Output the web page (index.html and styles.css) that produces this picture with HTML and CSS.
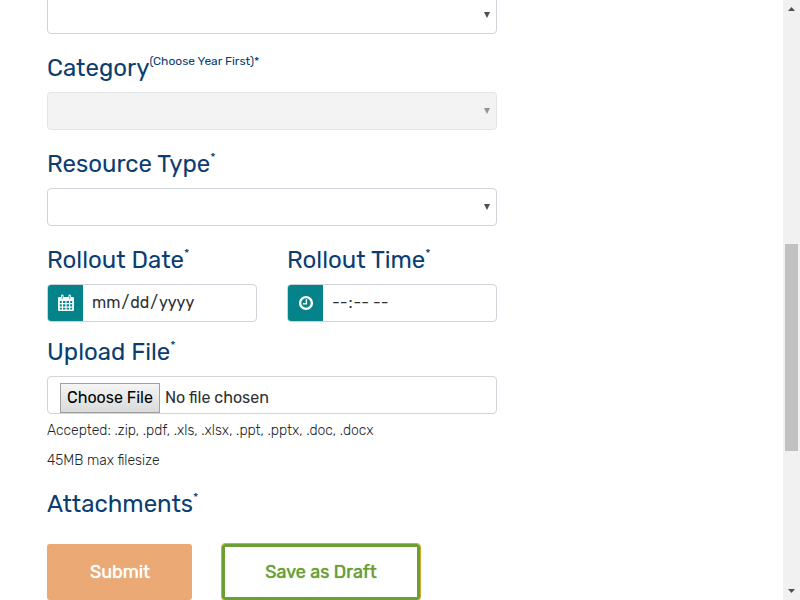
FILE: index.html
```html
<!DOCTYPE html>
<html lang="en">
<head>
<meta charset="utf-8">
<title>Submit a Resource</title>
<link rel="stylesheet" href="styles.css">
</head>
<body>
<main class="page">
  <form class="form">
    <div class="select-wrap"><select class="control" aria-label="Year"><option></option></select></div>

    <div class="field">
      <label class="label" for="category">Category<sup>(Choose Year First)*</sup></label>
      <div class="select-wrap is-disabled"><select class="control" id="category" disabled><option></option></select></div>
    </div>

    <div class="field">
      <label class="label" for="type">Resource Type<sup>*</sup></label>
      <div class="select-wrap"><select class="control" id="type"><option></option></select></div>
    </div>

    <div class="pair">
      <div class="field">
        <label class="label" for="date">Rollout Date<sup>*</sup></label>
        <div class="control group">
          <span class="addon">
            <svg width="16" height="18" viewBox="0 0 16 18" aria-hidden="true">
              <path fill="#fff" fill-rule="evenodd" d="M1.2 3H3V1.8Q3 .5 4.3 .5T5.6 1.8V3H10.4V1.8Q10.4.5 11.7.5T13 1.8V3h1.8q1.2 0 1.2 1.2v11.6q0 1.2-1.2 1.2H1.2Q0 17 0 15.8V4.2Q0 3 1.2 3zM1.8 7v2h2V7zm3.2 0v2h2.4V7zm3.6 0v2H11V7zm3.6 0v2h2V7zM1.8 10.2v2.4h2v-2.4zm3.2 0v2.4h2.4v-2.4zm3.6 0v2.4H11v-2.4zm3.6 0v2.4h2v-2.4zM1.8 13.8v1.8h2v-1.8zm3.2 0v1.8h2.4v-1.8zm3.6 0v1.8H11v-1.8zm3.6 0v1.8h2v-1.8z"/>
              <path stroke="#04848a" stroke-width=".8" stroke-linecap="round" d="M4.3 2v2.4M11.7 2v2.4"/>
            </svg>
          </span>
          <input class="group-input" id="date" type="date">
        </div>
      </div>
      <div class="field">
        <label class="label" for="time">Rollout Time<sup>*</sup></label>
        <div class="control group">
          <span class="addon">
            <svg width="16" height="16" viewBox="0 0 16 16" fill="none" stroke="#fff" aria-hidden="true">
              <circle cx="8" cy="8" r="5.9" stroke-width="2.4"/>
              <path stroke-width="1.4" d="M8.4 4.3v4.4H5"/>
            </svg>
          </span>
          <input class="group-input" id="time" type="time">
        </div>
      </div>
    </div>

    <div class="field field-upload">
      <label class="label" for="file">Upload File<sup>*</sup></label>
      <input class="control file" id="file" type="file">
    </div>
    <div class="hints">
      <p>Accepted: .zip, .pdf, .xls, .xlsx, .ppt, .pptx, .doc, .docx</p>
      <p>45MB max filesize</p>
    </div>

    <h2 class="label attachments">Attachments<sup>*</sup></h2>

    <div class="actions">
      <button class="btn btn-submit" type="submit">Submit</button>
      <button class="btn btn-draft" type="button">Save as Draft</button>
    </div>
  </form>
</main>
<div class="scrollbar" aria-hidden="true">
  <svg width="17" height="17" viewBox="0 0 17 17"><path fill="#505050" d="M5 11l3.5-4 3.5 4z"/></svg>
  <span class="thumb"></span>
  <svg class="down" width="17" height="17" viewBox="0 0 17 17"><path fill="#505050" d="M5 6l3.5 4L12 6z"/></svg>
</div>
</body>
</html>
```
FILE: styles.css
```css
* { box-sizing: border-box; }

body {
  display: flex;
  height: 100vh;
  margin: 0;
  overflow: hidden;
  background: #fff;
  color: #212529;
  font-family: Rubik, Inter, sans-serif;
  font-weight: 400;
}

.page {
  flex: 1;
  padding-left: 47px;
}

.form {
  max-width: 450px;
  margin-top: -4px;
}

.label {
  display: block;
  margin: 0 0 6px;
  color: #0b3d70;
  font-size: 24px;
  font-weight: 400;
  line-height: 36px;
  white-space: nowrap;
}

.label sup {
  font-size: 12px;
  line-height: 0;
  vertical-align: 11px;
}

.field { margin-top: 16px; }
.field-upload { margin-top: 12px; }

.control {
  display: block;
  width: 100%;
  height: 38px;
  border: 1px solid #ced4da;
  border-radius: 4px;
  background: #fff;
  color: #2d3135;
  font: inherit;
  font-size: 16px;
}

select.control {
  appearance: none;
  padding: 6px 12px;
}

.select-wrap { position: relative; }

.select-wrap::after {
  content: "";
  position: absolute;
  top: 16px;
  right: 7px;
  border: solid transparent;
  border-width: 6px 3px 0;
  border-top-color: #495057;
  pointer-events: none;
}

.is-disabled { opacity: .6; }
.is-disabled .control { background: #ececec; opacity: 1; }

.pair {
  display: grid;
  grid-template-columns: 1fr 1fr;
  gap: 30px;
}

.group {
  display: flex;
  overflow: hidden;
}

.addon {
  display: flex;
  flex: none;
  align-items: center;
  justify-content: center;
  width: 35px;
  background: #04848a;
}

.group-input {
  flex: 1;
  min-width: 0;
  padding: 0 8px 2px;
  border: 0;
  background: none;
  color: inherit;
  font: inherit;
}

.group-input::-webkit-calendar-picker-indicator { display: none; }

.file {
  padding: 6px 12px;
  overflow: hidden;
}

.file::file-selector-button {
  height: 30px;
  margin: 0 5px 0 0;
  padding: 0 6px 2px;
  border: 1px solid #a0a0a0;
  border-radius: 0;
  background: linear-gradient(#f5f5f5, #dadada);
  color: #000;
  font: inherit;
}

.hints {
  padding-top: 2px;
  font-size: 14px;
  font-weight: 300;
  line-height: 30px;
}

.hints p { margin: 0; }

.attachments { margin: 10px 0 22px; }

.actions {
  display: flex;
  gap: 30px;
}

.btn {
  height: 56px;
  padding: 0 40px;
  border: 3px solid;
  border-radius: 3px;
  font: inherit;
  font-size: 18px;
  font-weight: 400;
  text-shadow: 0 0 1px currentColor;
  white-space: nowrap;
}

.btn-submit {
  width: 145px;
  border-color: #eaa975;
  background: #eaa975;
  color: #fff;
}

.btn-draft {
  width: 198px;
  border-color: #6a9f35;
  background: #fff;
  color: #6a9f35;
  outline: 1px solid #d9a92b;
}

.scrollbar {
  display: grid;
  grid-template-rows: 244fr 207fr 149fr;
  width: 17px;
  background: #f1f1f1;
}

.scrollbar svg { display: block; }
.thumb { margin: 0 2px; background: #c1c1c1; }
.down { align-self: end; }
```
